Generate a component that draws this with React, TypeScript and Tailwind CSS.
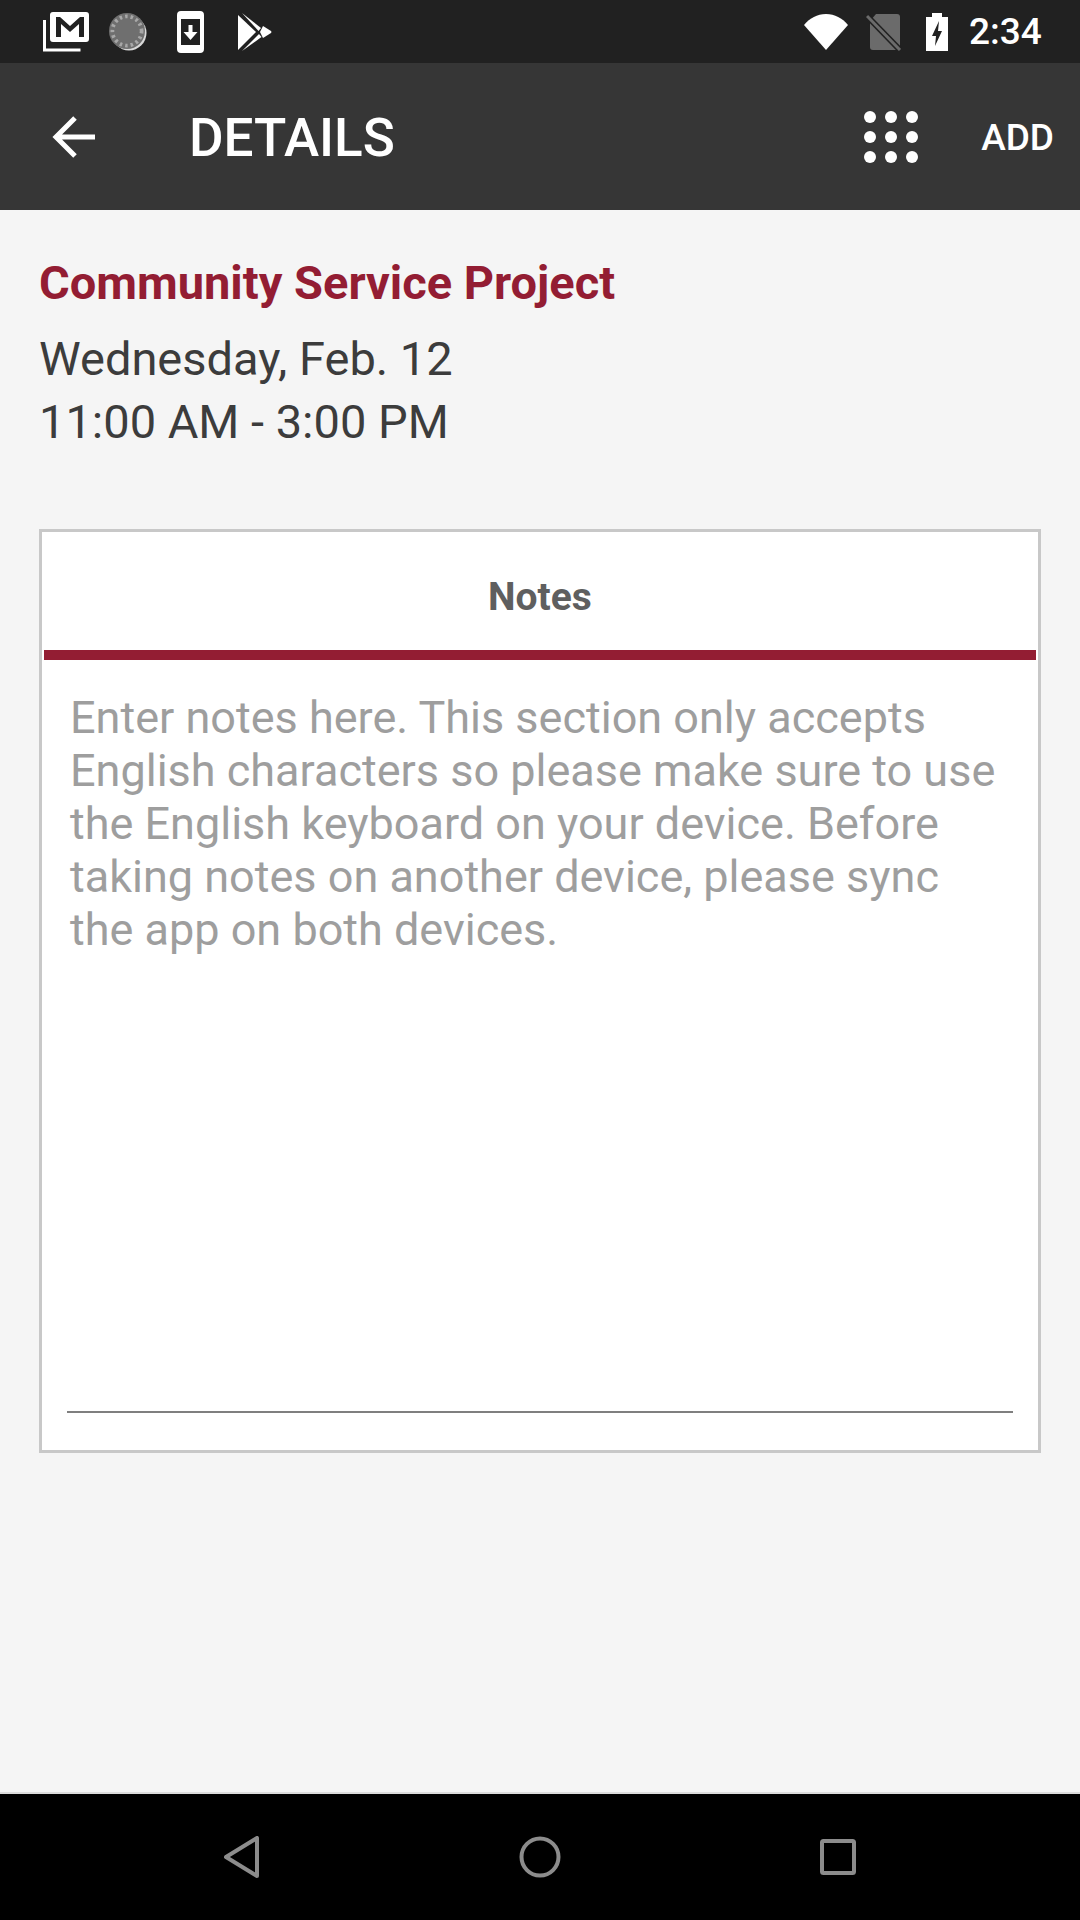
import React from 'react';

const noteText = [
  'Enter notes here. This section only accepts',
  'English characters so please make sure to use',
  'the English keyboard on your device. Before',
  'taking notes on another device, please sync',
  'the app on both devices.',
];

const StatusLeftIcons = () => (
  <div className="flex items-center">
    <svg width="46" height="40" viewBox="0 0 46 40" className="ml-[43px]">
      <path d="M1.500 8v30h36" fill="none" stroke="#fff" strokeWidth="3" />
      <path fillRule="evenodd" fill="#fff" d="M10 0h33a3 3 0 0 1 3 3v24a3 3 0 0 1-3 3H10a3 3 0 0 1-3-3V3a3 3 0 0 1 3-3zm3 5v20h5V12l9 8 9-8v13h5V5h-4l-10 9-10-9z" />
    </svg>
    <svg width="40" height="40" viewBox="0 0 40 40" className="ml-[19px]">
      <circle cx="21" cy="21" r="17.500" fill="#d8d8d8" />
      <circle cx="19" cy="19" r="18" fill="#6f6f6f" />
      <circle cx="19" cy="19" r="14.500" fill="none" stroke="#a8a8a8" strokeWidth="4" strokeDasharray="2.5 3" />
      <circle cx="19" cy="19" r="12.500" fill="#6f6f6f" />
    </svg>
    <svg width="28" height="42" viewBox="0 0 28 42" className="ml-[29px]">
      <path fillRule="evenodd" fill="#fff" d="M4 0h19a4 4 0 0 1 4 4v34a4 4 0 0 1-4 4H4a4 4 0 0 1-4-4V4a4 4 0 0 1 4-4zm0 8v26h19V8z" />
      <path fill="#fff" d="M11.500 14h4v7h5l-7 8-7-8h5z" />
    </svg>
    <svg width="36" height="40" viewBox="0 0 36 40" className="ml-[32px]">
      <path fill="#fff" d="M1 3l18 17L1 38z" />
      <path fill="#fff" d="M5 1l19 15-2.500 3z" />
      <path fill="#fff" d="M26 14l8 5q1 1 0 2l-8 5-3-6z" />
      <path fill="#fff" d="M22 22l2.500 3L5 39z" />
    </svg>
  </div>
);

const StatusRightIcons = () => (
  <div className="flex items-center">
    <svg width="46" height="38" viewBox="0 0 46 38">
      <path fill="#fff" d="M23 37L1 12C7 5 14 1 23 1s16 4 22 11z" />
    </svg>
    <svg width="36" height="38" viewBox="0 0 36 38" className="ml-[17px]">
      <path fill="#6b6b6b" d="M10 1h21a3 3 0 0 1 3 3v30a3 3 0 0 1-3 3H7a3 3 0 0 1-3-3V8z" />
      <path d="M1 3l33 34" stroke="#212121" strokeWidth="6" />
      <path d="M1 3l33 34" stroke="#6b6b6b" strokeWidth="3" />
    </svg>
    <svg width="22" height="38" viewBox="0 0 22 38" className="ml-[24px]">
      <path fillRule="evenodd" fill="#fff" d="M6 0h10v4h6v34H0V4h6zM13 8l-7 15h4l-1 10 7-15h-4z" />
    </svg>
    <span className="ml-[21px] w-[73px] text-[37px] leading-none font-medium text-white">2:34</span>
  </div>
);

const GridIcon = () => (
  <svg width="54" height="52" viewBox="0 0 54 52">
    {[6, 26, 46].flatMap((y) =>
      [6, 27, 48].map((x) => <circle key={`${x}-${y}`} cx={x} cy={y} r="6" fill="#fff" />),
    )}
  </svg>
);

const NavBar = () => (
  <div className="h-[126px] bg-black flex items-center">
    <svg width="36" height="42" viewBox="0 0 36 42" className="ml-[224px]">
      <path d="M33 2v38L2 21z" fill="none" stroke="#8c8c8c" strokeWidth="4" strokeLinejoin="round" />
    </svg>
    <svg width="42" height="42" viewBox="0 0 42 42" className="ml-[259px]">
      <circle cx="21" cy="21" r="18.500" fill="none" stroke="#8c8c8c" strokeWidth="4" />
    </svg>
    <svg width="36" height="36" viewBox="0 0 36 36" className="ml-[259px]">
      <rect x="2" y="2" width="32" height="32" rx="1.500" fill="none" stroke="#8c8c8c" strokeWidth="4" />
    </svg>
  </div>
);

export default function App() {
  return (
    <div className="w-[1080px] h-[1920px] flex flex-col bg-[#f5f5f5] font-['Roboto',sans-serif]">
      <div className="h-[63px] bg-[#212121] flex items-center justify-between pr-[38px]">
        <StatusLeftIcons />
        <StatusRightIcons />
      </div>

      <div className="h-[147px] bg-[#363636] flex items-center text-white">
        <svg width="44" height="42" viewBox="0 0 44 42" className="ml-[52px]">
          <path d="M43 21H4M23 2L4 21l19 19" fill="none" stroke="#fff" strokeWidth="5" />
        </svg>
        <span className="ml-[93px] pt-[3px] text-[53px] leading-none font-medium">DETAILS</span>
        <div className="ml-auto flex items-center">
          <GridIcon />
          <span className="ml-[63px] mr-[26px] pt-[2px] text-[37px] leading-none font-medium">ADD</span>
        </div>
      </div>

      <div className="flex-1 px-[39px] pt-[48px] border-b-2 border-[#dcdcdc]">
        <h1 className="text-[47px] leading-[50px] font-bold text-[#931d33]">Community Service Project</h1>
        <div className="mt-[19px] text-[47px] leading-[63px] text-[#3c3c3c]">
          <p>Wednesday, Feb. 12</p>
          <p>11:00 AM - 3:00 PM</p>
        </div>

        <div className="mt-[76px] h-[924px] bg-white border-[3px] border-[#c8c8c8] flex flex-col">
          <div className="h-[118px] pt-[12px] flex items-center justify-center text-[39px] font-bold text-[#5f5f5f]">Notes</div>
          <div className="h-[10px] mx-[2px] bg-[#931d33]" />
          <div className="flex-1 flex flex-col px-[25px] pt-[31px] pb-[37px]">
            <div className="flex-1 px-[3px] text-[45px] leading-[53px] text-[#9e9e9e]">
              {noteText.map((line) => (
                <p key={line} className="whitespace-nowrap">{line}</p>
              ))}
            </div>
            <div className="h-[2px] bg-[#7f7f7f]" />
          </div>
        </div>
      </div>

      <NavBar />
    </div>
  );
}
